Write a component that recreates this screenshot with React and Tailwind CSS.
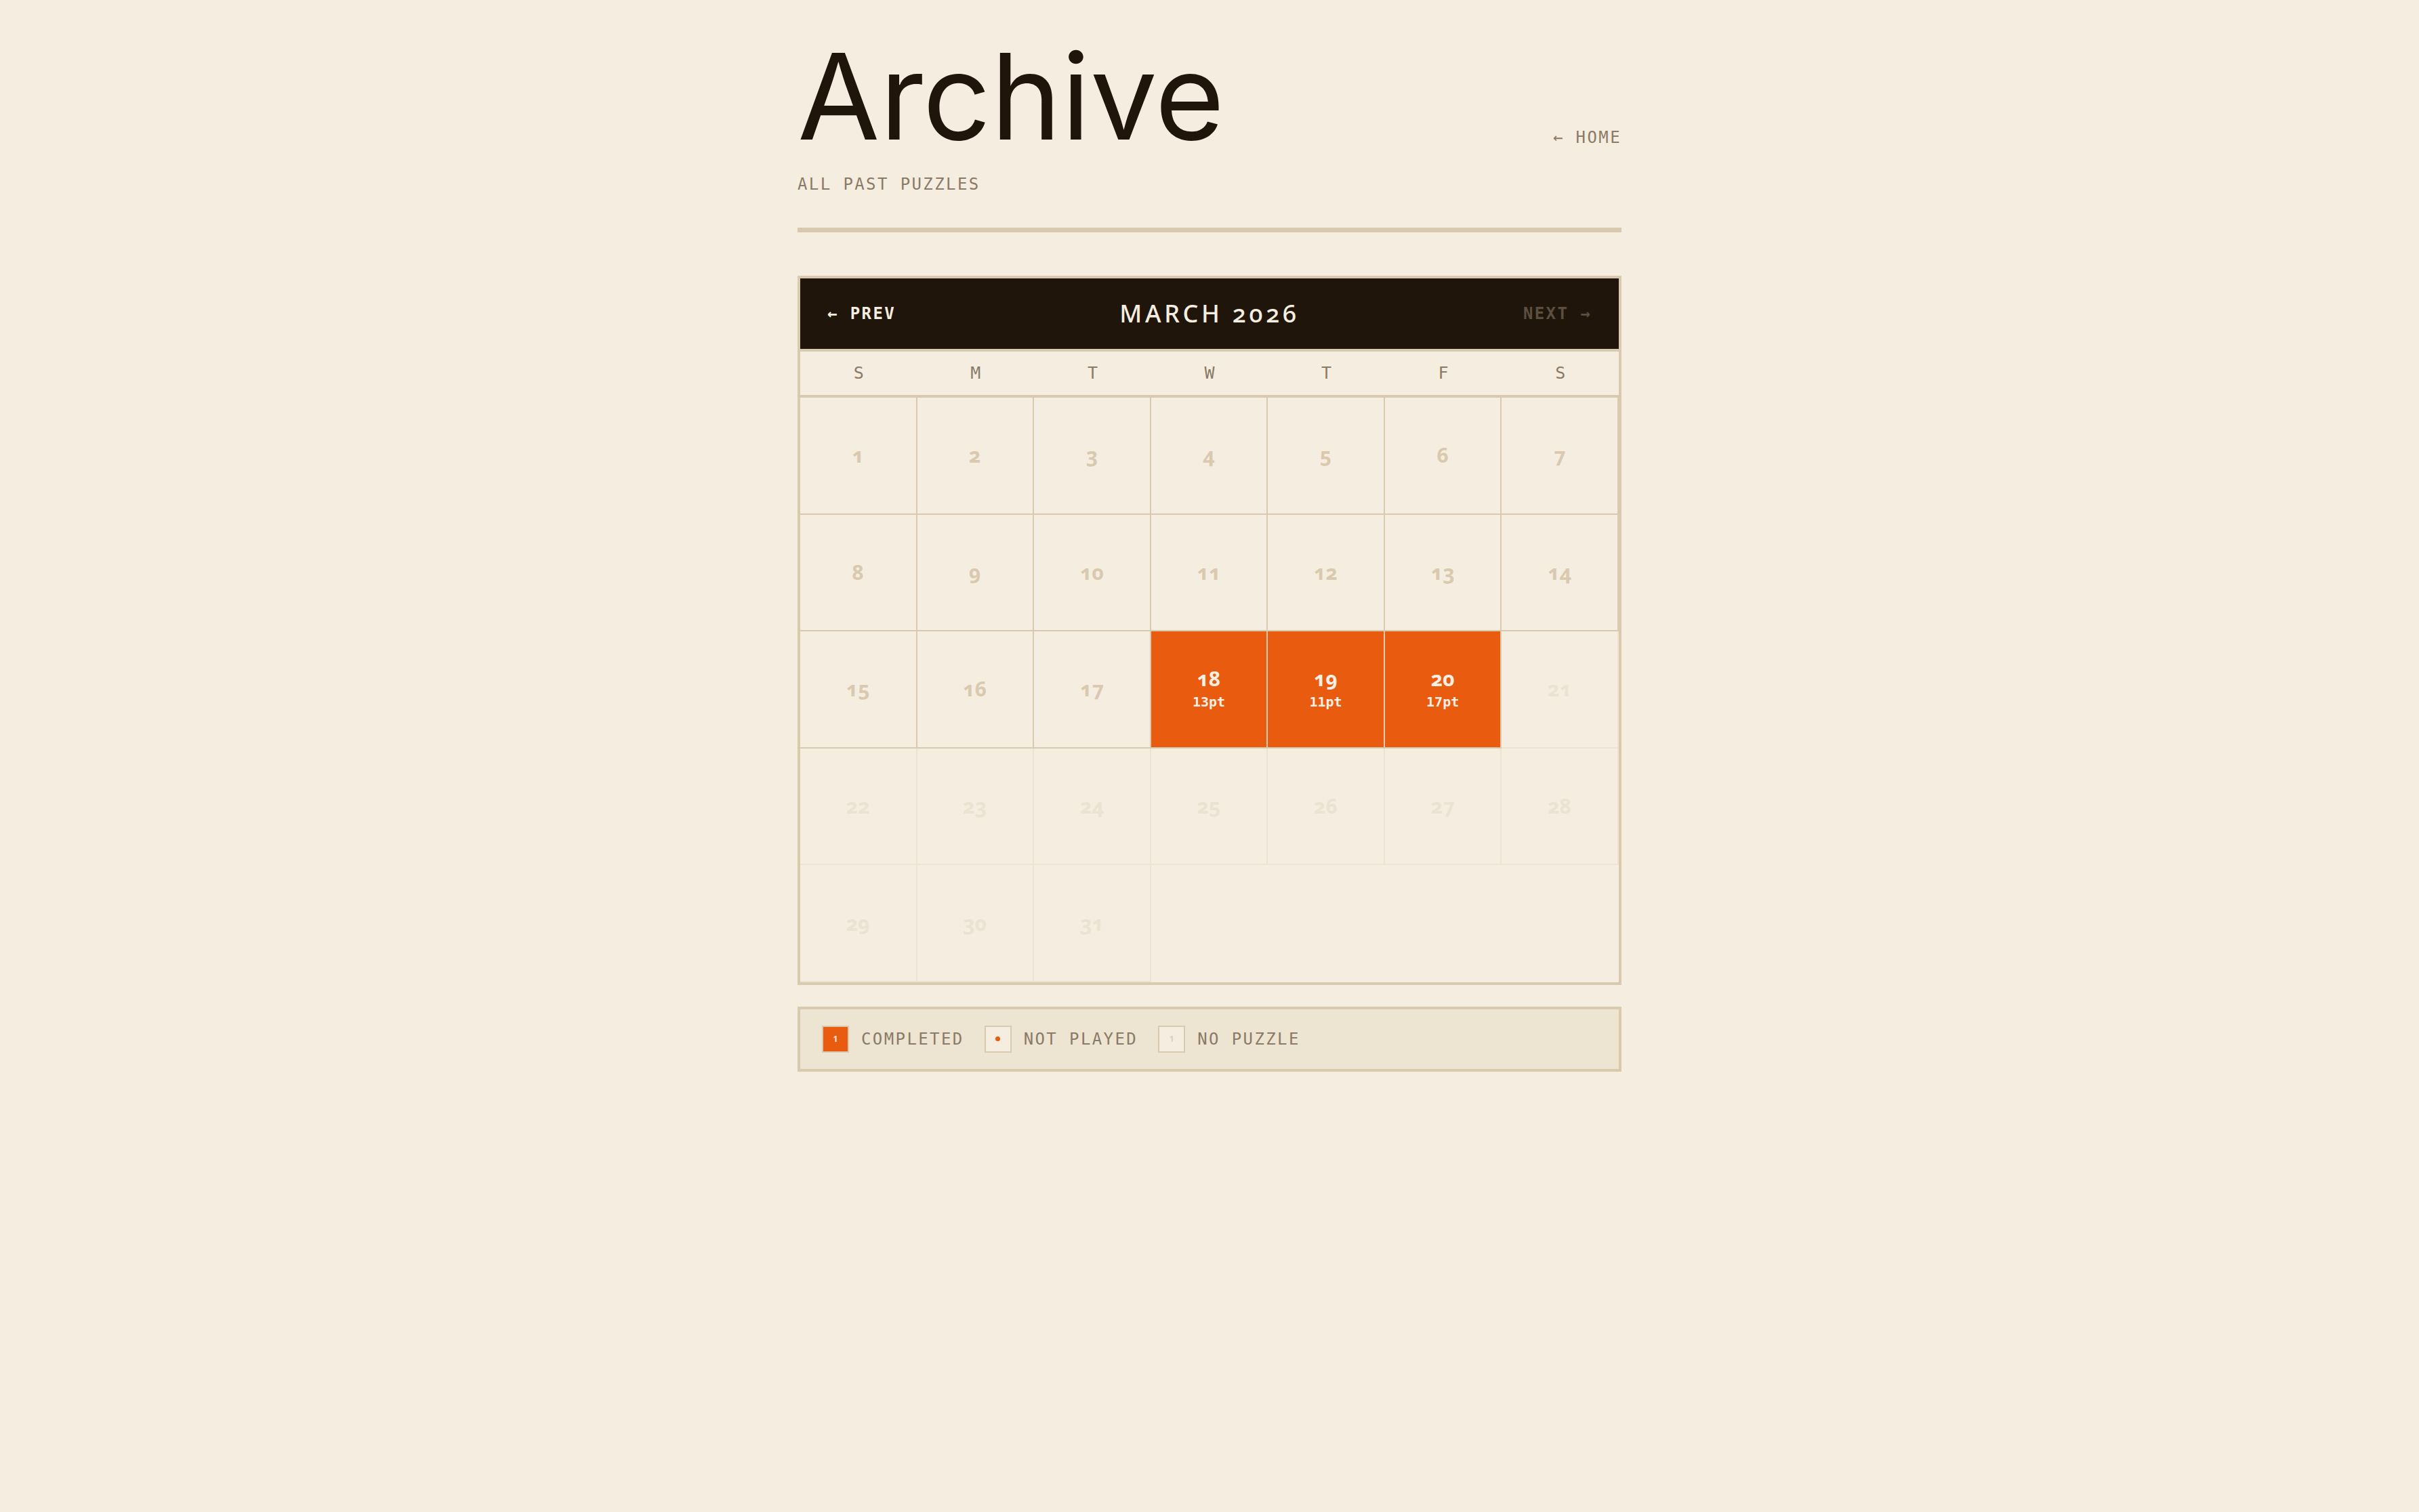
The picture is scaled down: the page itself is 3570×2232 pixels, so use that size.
import React from "react";

const mono = "font-['DejaVu_Sans_Mono',monospace]";
const display = "font-['Noto_Sans',sans-serif]";
const grotesk = "font-['Inter',sans-serif]";

const scores = { 18: "13pt", 19: "11pt", 20: "17pt" };
const weekdays = ["S", "M", "T", "W", "T", "F", "S"];
const cells = Array.from({ length: 35 }, (_, i) => i + 1);

const DayCell = ({ day }) => {
    if (day > 31) {
        return <div className="aspect-square" />;
    }

    if (scores[day]) {
        return (
            <div className="aspect-square border-r-2 border-b-2 border-[#D9C9AE] bg-[#E95B0F] flex flex-col items-center justify-center gap-[6px]">
                <span className={`${display} oldstyle-nums text-[30px] leading-[32px] font-bold text-[#F7EFE3]`}>
                    {day}
                </span>
                <span className={`${mono} text-[20px] leading-[24px] font-bold text-[#F7EFE3]`}>
                    {scores[day]}
                </span>
            </div>
        );
    }

    // past days keep the darker rule, days with no puzzle fade out
    const past = day <= 20;
    return (
        <div
            className={
                past
                    ? "aspect-square border-r-2 border-b-2 border-[#D9C9AE] flex items-center justify-center"
                    : "aspect-square border-r-2 border-b-2 border-[#ECE3D3] flex items-center justify-center"
            }
        >
            <span
                className={`${display} oldstyle-nums text-[30px] leading-[32px] font-bold ${
                    past ? "text-[#D9C9AE]" : "text-[#EBE2D1]"
                }`}
            >
                {day}
            </span>
        </div>
    );
};

const LegendItem = ({ swatch, label }) => (
    <div className="flex items-center gap-[18px]">
        {swatch}
        <span className={`${mono} text-[24px] leading-[28px] tracking-[0.1em] text-[#8B7A65]`}>
            {label}
        </span>
    </div>
);

const App = () => {
    return (
        <div className="min-h-screen bg-[#F5EDE0]">
            <div className="w-[1216px] mx-auto pt-[54px] pb-[120px]">
                {/* Page header */}
                <header className="pb-[50px] border-b-[7px] border-[#D8C8AE]">
                    <div className="flex items-end justify-between">
                        <h1 className={`${grotesk} text-[176px] leading-none font-normal text-[#1F150A]`}>
                            Archive
                        </h1>
                        <a
                            href="#"
                            className={`${mono} mb-[13px] text-[24px] leading-[28px] tracking-[0.1em] text-[#8B7A65]`}
                        >
                            ← HOME
                        </a>
                    </div>
                    <p className={`${mono} mt-[28px] text-[24px] leading-[28px] tracking-[0.1em] text-[#8B7A65]`}>
                        ALL PAST PUZZLES
                    </p>
                </header>

                {/* Calendar */}
                <section className="mt-[64px] border-4 border-[#D9C9AE]">
                    <div className="h-[108px] bg-[#1F150A] border-b-4 border-[#D9C9AE] px-[40px] flex items-center justify-between">
                        <button className={`${mono} text-[24px] leading-[28px] tracking-[0.1em] font-bold text-[#F5EDE0]`}>
                            ← PREV
                        </button>
                        <h2 className={`${display} oldstyle-nums text-[36px] leading-[40px] tracking-[0.13em] font-medium text-[#F5EDE0]`}>
                            MARCH 2026
                        </h2>
                        <button className={`${mono} text-[24px] leading-[28px] tracking-[0.1em] font-bold text-[#5C4F40]`}>
                            NEXT →
                        </button>
                    </div>

                    <div className="h-[68px] grid grid-cols-7 items-center border-b-4 border-[#D9C9AE]">
                        {weekdays.map((d, i) => (
                            <span
                                key={i}
                                className={`${mono} text-center text-[25px] leading-[28px] text-[#8B7A65]`}
                            >
                                {d}
                            </span>
                        ))}
                    </div>

                    <div className="grid grid-cols-7">
                        {cells.map((day) => (
                            <DayCell key={day} day={day} />
                        ))}
                    </div>
                </section>

                {/* Legend */}
                <div className="mt-[32px] border-4 border-[#D9C9AE] bg-[#EDE4D2] px-[32px] py-[24px] flex items-center gap-[30px]">
                    <LegendItem
                        label="COMPLETED"
                        swatch={
                            <div className="w-[40px] h-[40px] border-2 border-[#D9C9AE] bg-[#E95B0F] flex items-center justify-center">
                                <span className={`${display} text-[12px] leading-none font-bold text-[#F7EFE3]`}>1</span>
                            </div>
                        }
                    />
                    <LegendItem
                        label="NOT PLAYED"
                        swatch={
                            <div className="w-[40px] h-[40px] border-2 border-[#D9C9AE] bg-[#F5EDE0] flex items-center justify-center">
                                <span className="w-[7px] h-[7px] rounded-full bg-[#E95B0F]" />
                            </div>
                        }
                    />
                    <LegendItem
                        label="NO PUZZLE"
                        swatch={
                            <div className="w-[40px] h-[40px] border-2 border-[#D9C9AE] bg-[#F5EDE0] flex items-center justify-center">
                                <span className={`${display} text-[12px] leading-none font-bold text-[#DDD0B8]`}>1</span>
                            </div>
                        }
                    />
                </div>
            </div>
        </div>
    );
};

export default App;
